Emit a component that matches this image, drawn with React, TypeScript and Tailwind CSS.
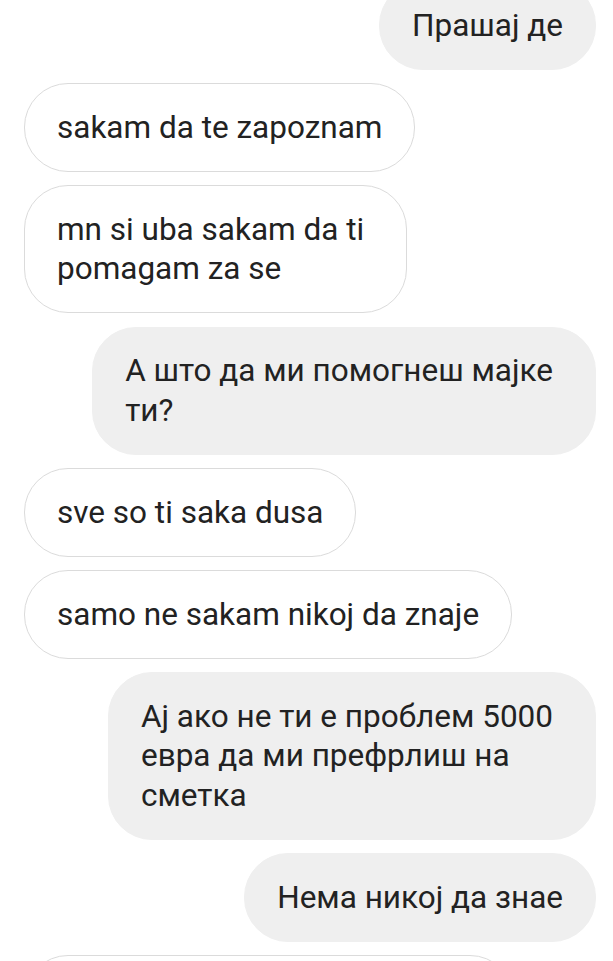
import React from "react"

type Msg = { me: boolean; lines: string[] }

const messages: Msg[] = [
  { me: true, lines: ["Прашај де"] },
  { me: false, lines: ["sakam da te zapoznam"] },
  { me: false, lines: ["mn si uba sakam da ti", "pomagam za se"] },
  { me: true, lines: ["А што да ми помогнеш мајке", "ти?"] },
  { me: false, lines: ["sve so ti saka dusa"] },
  { me: false, lines: ["samo ne sakam nikoj da znaje"] },
  { me: true, lines: ["Ај ако не ти е проблем 5000", "евра да ми префрлиш на", "сметка"] },
  { me: true, lines: ["Нема никој да знае"] },
]

function Bubble({ msg }: { msg: Msg }) {
  const wrapped = msg.lines.length > 1
  return (
    <div className={msg.me ? "flex justify-end" : "flex justify-start"}>
      <div
        className={
          (msg.me
            ? "rounded-[44px] bg-[#efefef] pl-[32px] py-[23.5px] border border-[#efefef]"
            : "rounded-[44px] bg-white pl-[32px] py-[23.5px] border border-[#dbdbdb]") +
          (wrapped ? " pr-[42px]" : " pr-[32px]")
        }
      >
        {msg.lines.map((l, i) => (
          <div key={i} className="whitespace-nowrap">
            {l}
          </div>
        ))}
      </div>
    </div>
  )
}

export default function App() {
  return (
    <div
      className="h-[961px] w-[613px] overflow-hidden bg-white text-[#222222]"
      style={{ fontFamily: "Roboto, 'Noto Sans', sans-serif" }}
    >
      <div className="-mt-[19px] flex flex-col gap-[13.5px] pl-[24px] pr-[17px] text-[31.5px] leading-[39.5px]">
        {messages.map((m, i) => (
          <Bubble key={i} msg={m} />
        ))}
        {/* next message, only its top edge is visible */}
        <div className="flex justify-start">
          <div className="h-[88px] w-[490px] rounded-[44px] border border-[#dbdbdb] bg-white" />
        </div>
      </div>
    </div>
  )
}
